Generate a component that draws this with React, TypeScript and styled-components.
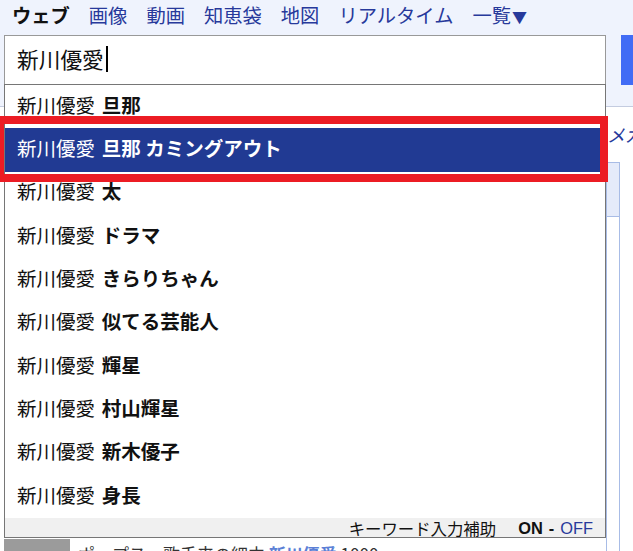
import * as React from 'react';
import styled, { createGlobalStyle } from 'styled-components';

const colors = {
  headerBg: '#eff3fd',
  link: '#27399b',
  border: '#999999',
  dropBorder: '#767676',
  highlight: '#213a93',
  annotation: '#ec1c24',
  footerBg: '#f0f0f0',
  button: '#416cf5',
  rule: '#c4cce0',
  sideBorder: '#a8bce6',
  sideBg: '#e5ebfa',
};

const font = `"Noto Sans CJK JP", "Noto Sans", sans-serif`;

const GlobalStyle = createGlobalStyle`
  html, body {
    margin: 0;
    padding: 0;
    background: #fff;
    overflow: hidden;
  }
  body {
    font-family: ${font};
  }
`;

const Page = styled.div`
  position: relative;
  width: 633px;
  height: 551px;
  overflow: hidden;
  display: flex;
  flex-direction: column;
`;

const Header = styled.div`
  flex: none;
  height: 107px;
  background: ${colors.headerBg};
  border-bottom: 1px solid ${colors.rule};
  box-sizing: border-box;
`;

const Tabs = styled.nav`
  height: 35px;
  display: flex;
  align-items: center;
  gap: 19px;
  padding: 0 0 3px 12px;
  box-sizing: border-box;
  font-size: 19.3px;
  line-height: 1;
`;

const Tab = styled.span<{ $active?: boolean }>`
  color: ${p => (p.$active ? '#111' : colors.link)};
  font-weight: ${p => (p.$active ? 700 : 400)};
  white-space: nowrap;
`;

const Arrow = styled.span`
  font-size: 15px;
  margin-left: 1px;
`;

const SearchRow = styled.div`
  position: relative;
  display: flex;
  gap: 15px;
  padding-left: 4px;
`;

const InputBox = styled.div`
  flex: none;
  width: 602px;
  height: 50px;
  box-sizing: border-box;
  border: 1px solid ${colors.border};
  background: #fff;
  display: flex;
  align-items: center;
  padding: 0 0 3px 12px;
  font-size: 21.7px;
  color: #111;
`;

const Caret = styled.span`
  display: inline-block;
  width: 2px;
  height: 26px;
  background: #000;
  margin-left: 2px;
`;

const SearchButton = styled.div`
  flex: none;
  width: 40px;
  height: 50px;
  background: ${colors.button};
`;

const Dropdown = styled.div`
  position: absolute;
  left: 4px;
  top: 49px;
  width: 602px;
  box-sizing: border-box;
  border: 1px solid ${colors.dropBorder};
  background: #fff;
  z-index: 5;
`;

const Row = styled.div<{ $selected?: boolean }>`
  position: relative;
  height: 43.33px;
  box-sizing: border-box;
  display: flex;
  align-items: center;
  padding: 0 0 5px 12px;
  font-size: 19.5px;
  color: ${p => (p.$selected ? '#fff' : '#111')};
  background: ${p => (p.$selected ? colors.highlight : '#fff')};
  white-space: nowrap;
`;

const Strong = styled.b`
  font-weight: 700;
  margin-left: 0.35em;
`;

const Annotation = styled.span`
  position: absolute;
  z-index: 2;
  left: -9px;
  right: -3px;
  top: -12px;
  bottom: -10px;
  border: 8px solid ${colors.annotation};
  pointer-events: none;
`;

const Footer = styled.div`
  height: 19px;
  background: ${colors.footerBg};
  display: flex;
  align-items: center;
  justify-content: flex-end;
  gap: 6px;
  padding-right: 12px;
  font-size: 16.4px;
  color: #111;
  line-height: 1;
`;

const Label = styled.span`
  margin-right: 16px;
`;

const On = styled.b`
  font-weight: 700;
  font-family: "Liberation Sans", Arial, sans-serif;
`;

const Off = styled.span`
  color: ${colors.link};
  font-family: "Liberation Sans", Arial, sans-serif;
`;

const Body = styled.div`
  flex: 1;
  display: flex;
  min-height: 0;
`;

const MainCol = styled.div`
  width: 606px;
  flex: none;
  display: flex;
  flex-direction: column;
  overflow: hidden;
`;

const BottomLine = styled.div`
  margin-top: auto;
  height: 12px;
  display: flex;
  align-items: flex-start;
  gap: 8px;
  padding-left: 4px;
  font-size: 17px;
  line-height: 1;
  color: #333;
  white-space: nowrap;
  overflow: hidden;
`;

const Thumb = styled.span`
  width: 66px;
  height: 12px;
  background: #9b9b9b;
  flex: none;
`;

const Snippet = styled.span`
  padding-top: 6px;
`;

const Mark = styled.span`
  color: #5b7fd6;
  font-weight: 700;
`;

const SideCol = styled.div`
  flex: 1;
  display: flex;
  flex-direction: column;
  padding-top: 14px;
  padding-left: 1px;
`;

const SideText = styled.div`
  font-size: 18px;
  font-style: italic;
  color: ${colors.link};
  white-space: nowrap;
`;

const SideBox = styled.div`
  width: 12px;
  flex: 1;
  margin-top: 15px;
  margin-left: -1px;
  border: 1px solid ${colors.sideBorder};
  border-bottom: none;
  display: flex;
  flex-direction: column;
`;

const SideBoxHead = styled.div`
  height: 53px;
  background: ${colors.sideBg};
  border-bottom: 1px solid ${colors.sideBorder};
`;

const tabs = ['画像', '動画', '知恵袋', '地図', 'リアルタイム'];

const query = '新川優愛';

const suggestions = [
  '旦那',
  '旦那 カミングアウト',
  '太',
  'ドラマ',
  'きらりちゃん',
  '似てる芸能人',
  '輝星',
  '村山輝星',
  '新木優子',
  '身長',
];

const selectedIndex = 1;

export default function App() {
  return (
    <Page>
      <GlobalStyle />
      <Header>
        <Tabs>
          <Tab $active>ウェブ</Tab>
          {tabs.map(t => (
            <Tab key={t}>{t}</Tab>
          ))}
          <Tab>
            一覧<Arrow>▼</Arrow>
          </Tab>
        </Tabs>
        <SearchRow>
          <InputBox>
            {query}
            <Caret />
          </InputBox>
          <SearchButton />
          <Dropdown>
            {suggestions.map((s, i) => (
              <Row key={s} $selected={i === selectedIndex}>
                {query}
                <Strong>{s}</Strong>
                {i === selectedIndex ? <Annotation /> : null}
              </Row>
            ))}
            <Footer>
              <Label>キーワード入力補助</Label>
              <On>ON</On>
              <On>-</On>
              <Off>OFF</Off>
            </Footer>
          </Dropdown>
        </SearchRow>
      </Header>
      <Body>
        <MainCol>
          <BottomLine>
            <Thumb />
            <Snippet>
              ポップス・歌手来の細中 <Mark>新川優愛</Mark> 1000
            </Snippet>
          </BottomLine>
        </MainCol>
        <SideCol>
          <SideText>メガ</SideText>
          <SideBox>
            <SideBoxHead />
          </SideBox>
        </SideCol>
      </Body>
    </Page>
  );
}
